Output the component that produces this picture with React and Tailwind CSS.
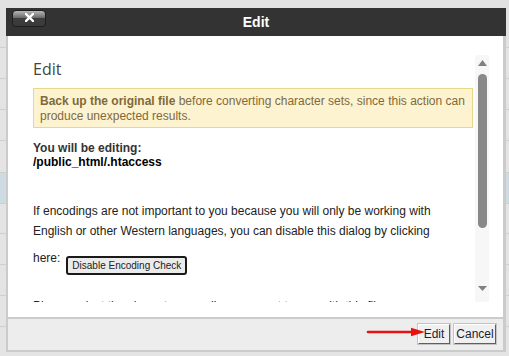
const rows = [
  { h: 'h-[47px]', cls: 'bg-[#e2e2e2]' },
  { h: 'h-[31px]', cls: 'bg-[#e4e4e4] border-t border-[#cfcfcf]' },
  { h: 'h-[31px]', cls: 'bg-[#e4e4e4] border-t border-[#cfcfcf]' },
  { h: 'h-[31px]', cls: 'bg-[#e4e4e4] border-t border-[#cfcfcf]' },
  { h: 'h-[32px]', cls: 'bg-[#e4e4e4] border-t border-[#cfcfcf]' },
  { h: 'h-[31px]', cls: 'bg-[#cfdbe3] border-t border-[#cfcfcf]' },
  { h: 'h-[30px]', cls: 'bg-[#e4e4e4] border-t border-[#cfcfcf]' },
  { h: 'h-[31px]', cls: 'bg-[#e4e4e4] border-t border-[#cfcfcf]' },
  { h: 'h-[31px]', cls: 'bg-[#e4e4e4] border-t border-[#cfcfcf]' },
  { h: 'h-[31px]', cls: 'bg-[#e4e4e4] border-t border-[#cfcfcf]' },
  { h: 'h-[30px]', cls: 'bg-[#e4e4e4] border-t border-[#cfcfcf]' },
]

function FooterButton({ children, width }) {
  return (
    <button
      className={`${width} h-[20px] flex items-center justify-center bg-[#f0f0f0] border border-t-white border-l-white border-r-[#5f5f5f] border-b-[#5f5f5f] shadow-[0_0_0_1px_#c4c4c4] text-[12px] leading-none text-[#1c1c34]`}
    >
      {children}
    </button>
  )
}

export default function App() {
  return (
    <div className="relative w-[509px] h-[356px] overflow-hidden bg-[#e2e2e2] font-['Liberation_Sans',Arial,sans-serif]">
      {/* page behind the dialog */}
      <div className="flex flex-col">
        {rows.map((r, i) => (
          <div key={i} className={`${r.h} ${r.cls} box-border`} />
        ))}
      </div>

      {/* dialog */}
      <div className="absolute left-[6px] top-[8px] w-[500px] h-[344px] flex flex-col">
        {/* title bar */}
        <div className="h-[28px] shrink-0 bg-[#333333] relative flex items-center justify-center">
          <button className="absolute left-[6px] top-[2px] w-[34px] h-[17px] rounded-[4px] border border-[#1e1e1e] bg-[linear-gradient(#b8b8b8_0%,#6a6a6a_45%,#3d3d3d_50%,#3a3a3a_100%)] flex justify-center pt-[2px]">
            <svg width="9" height="9" viewBox="0 0 9 9">
              <path d="M1 1 L8 8 M8 1 L1 8" stroke="#ffffff" strokeWidth="2.4" strokeLinecap="square" />
            </svg>
          </button>
          <span className="text-white font-bold text-[14px] leading-[28px]">Edit</span>
        </div>

        {/* body */}
        <div className="h-[281px] shrink-0 bg-white border-l-2 border-r-[3px] border-[#cbcbcb] pl-[25px] pr-[14px] pt-[19px]">
          <div className="h-[247px] flex gap-[2px]">
            <div className="flex-1 overflow-hidden pt-[3px] text-[12px] text-[#222]">
              <h2 className="font-['Open_Sans',sans-serif] text-[16px] leading-[22px] text-[#444]">Edit</h2>
              <div className="mt-[8px] border border-[#e6d98a] bg-[#fdf3d0] px-[6px] pt-[5px] pb-[3px] leading-[15px] text-[#806a3a]">
                <b>Back up the original file</b> before converting character sets, since this action can produce
                unexpected results.
              </div>
              <p className="mt-[13px] leading-[14px] font-bold text-[#333]">
                You will be editing:
                <br />
                <span className="text-black">/public_html/.htaccess</span>
              </p>
              <p className="mt-[32px] leading-[20px]">
                If encodings are not important to you because you will only be working with English or other Western
                languages, you can disable this dialog by clicking
              </p>
              <div className="mt-[7px] flex items-start gap-[6px]">
                <span className="leading-[20px]">here:</span>
                <button className="mt-[8px] h-[19px] px-[4px] rounded-[3px] border-2 border-[#1a1a1a] bg-[#ebebeb] text-[10px] leading-none text-[#222]">
                  Disable Encoding Check
                </button>
              </div>
              <p className="mt-[21px] leading-[20px]">
                Please select the character encoding you want to use with this file:
              </p>
            </div>

            {/* scrollbar */}
            <div className="w-[14px] bg-[#f7f7f7] flex flex-col items-center">
              <svg width="9" height="6" viewBox="0 0 9 6" className="mt-[5px]">
                <path d="M4.5 0 L9 6 L0 6 Z" fill="#808080" />
              </svg>
              <div className="mt-[8px] w-[9px] h-[154px] rounded-full bg-[#888888]" />
              <div className="flex-1" />
              <svg width="9" height="5" viewBox="0 0 9 5" className="mb-[11px]">
                <path d="M0 0 L9 0 L4.5 5 Z" fill="#808080" />
              </svg>
            </div>
          </div>
        </div>

        {/* footer */}
        <div className="flex-1 bg-[#ededed] border-t-2 border-l-2 border-r-[3px] border-b-2 border-[#cbcbcb] flex justify-end items-start gap-[4px] pt-[5px] pr-[7px]">
          <FooterButton width="w-[32px]">Edit</FooterButton>
          <FooterButton width="w-[42px]">Cancel</FooterButton>
        </div>
      </div>

      {/* red annotation arrow */}
      <svg className="absolute left-[366px] top-[327px]" width="62" height="10" viewBox="0 0 62 10">
        <path d="M2 5 L48 5" stroke="#e51212" strokeWidth="2.6" strokeLinecap="round" />
        <path d="M45 0.8 L59 5 L45 9.2 Z" fill="#e51212" />
      </svg>
    </div>
  )
}
